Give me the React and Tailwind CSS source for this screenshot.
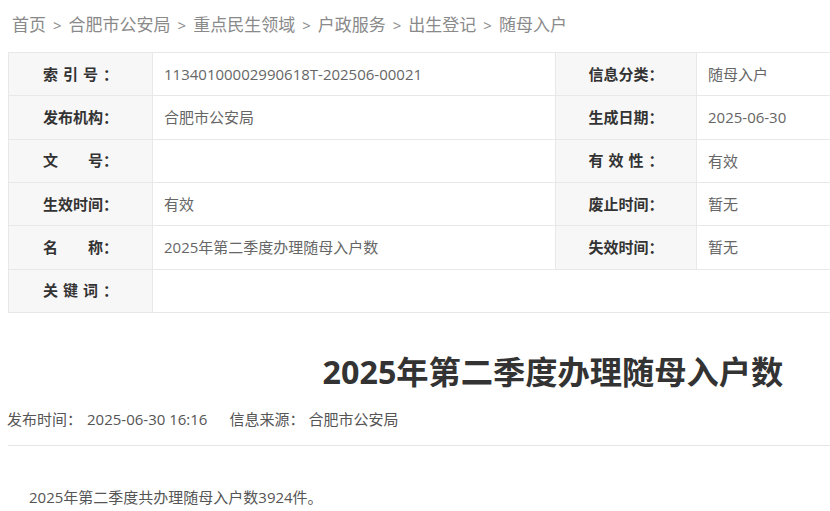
import React from "react";

const FONT = { fontFamily: '"Open Sans", "Noto Sans CJK SC", sans-serif' };

function Label({ chars }) {
  return (
    <div className="flex items-center justify-center bg-[#f7f7f7] border-r border-b border-[#e8e8e8] text-[15px] font-bold text-[#333]">
      <span className="inline-flex w-[75px] justify-between leading-none">
        {chars.map((c, i) => (
          <span key={i} className="inline-block w-[15px] text-center">
            {c}
          </span>
        ))}
      </span>
    </div>
  );
}

function Value({ children, span }) {
  return (
    <div
      className={
        "flex items-center pl-[11px] border-r border-b border-[#e8e8e8] text-[15px] text-[#666] " +
        (span ? "col-span-3" : "")
      }
    >
      {children}
    </div>
  );
}

export default function App() {
  const crumbs = ["首页", "合肥市公安局", "重点民生领域", "户政服务", "出生登记", "随母入户"];
  return (
    <div className="w-[830px] h-[511px] overflow-hidden bg-white" style={FONT}>
      <div className="w-[1090px] ml-[8px]">
        <div className="h-[52px] flex items-center pb-[2px] pl-[4px] text-[17px] text-[#8a8a8a]">
          {crumbs.map((c, i) => (
            <React.Fragment key={i}>
              {i > 0 && <span className="mx-[7px] text-[15px]">&gt;</span>}
              <span>{c}</span>
            </React.Fragment>
          ))}
        </div>

        <div className="grid grid-cols-[144px_403px_141px_402px] auto-rows-[43.33px] border-t border-l border-[#e8e8e8]">
          <Label chars={["索", "引", "号", "："]} />
          <Value>11340100002990618T-202506-00021</Value>
          <Label chars={["信", "息", "分", "类", "："]} />
          <Value>随母入户</Value>

          <Label chars={["发", "布", "机", "构", "："]} />
          <Value>合肥市公安局</Value>
          <Label chars={["生", "成", "日", "期", "："]} />
          <Value>2025-06-30</Value>

          <Label chars={["文", "", "", "号", "："]} />
          <Value></Value>
          <Label chars={["有", "效", "性", "："]} />
          <Value>有效</Value>

          <Label chars={["生", "效", "时", "间", "："]} />
          <Value>有效</Value>
          <Label chars={["废", "止", "时", "间", "："]} />
          <Value>暂无</Value>

          <Label chars={["名", "", "", "称", "："]} />
          <Value>2025年第二季度办理随母入户数</Value>
          <Label chars={["失", "效", "时", "间", "："]} />
          <Value>暂无</Value>

          <Label chars={["关", "键", "词", "："]} />
          <Value span></Value>
        </div>

        <h1 className="mt-[39px] text-center text-[32.25px] leading-[40px] font-bold text-[#333]">
          2025年第二季度办理随母入户数
        </h1>

        <div className="mt-[17px] h-[20px] flex items-center text-[15px] text-[#555] -ml-[1px]">
          <span>发布时间：</span>
          <span className="ml-[5px]">2025-06-30 16:16</span>
          <span className="ml-[22px]">信息来源：</span>
          <span className="ml-[4px]">合肥市公安局</span>
        </div>

        <div className="mt-[16px] border-t border-[#e5e5e5]" />

        <p className="mt-[39px] pl-[21px] text-[15px] leading-[24px] text-[#555]">
          2025年第二季度共办理随母入户数3924件。
        </p>
      </div>
    </div>
  );
}
